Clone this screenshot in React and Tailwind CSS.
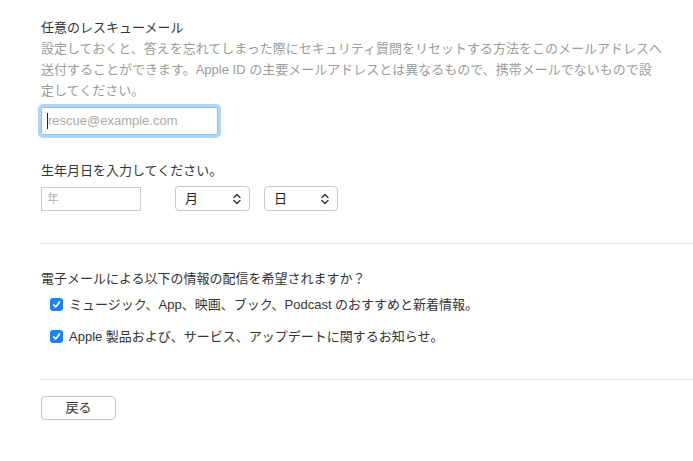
import { useState } from "react";

const font = { fontFamily: '"Liberation Sans", "Noto Sans CJK JP", sans-serif' };

function UpDown() {
  return (
    <svg width="8" height="12" viewBox="0 0 8 12" className="text-[#333]">
      <path d="M1 4.5 L4 1.5 L7 4.5" fill="none" stroke="currentColor" strokeWidth="1.4" strokeLinecap="round" strokeLinejoin="round" />
      <path d="M1 7.5 L4 10.5 L7 7.5" fill="none" stroke="currentColor" strokeWidth="1.4" strokeLinecap="round" strokeLinejoin="round" />
    </svg>
  );
}

function Select({ label, width }) {
  return (
    <div className={`${width} h-[25px] flex items-center justify-between pl-[9px] pr-[8px] bg-white border border-[#c9c9c9] rounded-[4px] text-[13px] text-[#222]`}>
      <span>{label}</span>
      <UpDown />
    </div>
  );
}

function Check({ checked, onToggle, children }) {
  return (
    <label className="flex items-center gap-[6px] cursor-pointer" onClick={onToggle}>
      <span className={`w-[13px] h-[13px] rounded-[3px] flex items-center justify-center ${checked ? "bg-[#1b82fb]" : "bg-white border border-[#bbb]"}`}>
        {checked && (
          <svg width="9" height="9" viewBox="0 0 9 9">
            <path d="M1.5 4.8 L3.6 6.9 L7.6 1.9" fill="none" stroke="white" strokeWidth="1.6" strokeLinecap="round" strokeLinejoin="round" />
          </svg>
        )}
      </span>
      <span className="text-[13px] text-[#333]">{children}</span>
    </label>
  );
}

export default function App() {
  const [music, setMusic] = useState(true);
  const [news, setNews] = useState(true);

  return (
    <div className="min-h-screen bg-white pl-[41px] pt-[17px]" style={font}>
      <section>
        <h2 className="text-[13px] leading-[21px] text-[#333]">任意のレスキューメール</h2>
        <p className="text-[13px] leading-[21px] text-[#9b9b9b] whitespace-nowrap">
          設定しておくと、答えを忘れてしまった際にセキュリティ質問をリセットする方法をこのメールアドレスへ
          <br />
          送付することができます。Apple ID の主要メールアドレスとは異なるもので、携帯メールでないもので設
          <br />
          定してください。
        </p>
        <div className="mt-[6px] w-[177px] h-[28px] flex items-center px-[5px] border border-[#94bde9] outline-[3px] outline-solid outline-[#b0d5fc] rounded-[2px]">
          <span className="w-px h-[16px] bg-[#222]" />
          <span className="text-[13px] text-[#aaa]">rescue@example.com</span>
        </div>
      </section>

      <section className="mt-[25px]">
        <h2 className="text-[13px] leading-[21px] text-[#333]">生年月日を入力してください。</h2>
        <div className="mt-[5px] flex items-center">
          <div className="w-[100px] h-[24px] flex items-center px-[5px] border border-[#cbcbcb] text-[12px] text-[#b5b5b5]">年</div>
          <div className="ml-[34px]"><Select label="月" width="w-[75px]" /></div>
          <div className="ml-[14px]"><Select label="日" width="w-[74px]" /></div>
        </div>
      </section>

      <hr className="mt-[32px] border-t border-[#e3e3e3]" />

      <section className="pt-[24px]">
        <h2 className="text-[13px] leading-[21px] text-[#333]">電子メールによる以下の情報の配信を希望されますか？</h2>
        <div className="mt-[6px] ml-[9px] flex flex-col gap-[12px]">
          <Check checked={music} onToggle={() => setMusic(!music)}>
            ミュージック、App、映画、ブック、Podcast のおすすめと新着情報。
          </Check>
          <Check checked={news} onToggle={() => setNews(!news)}>
            Apple 製品および、サービス、アップデートに関するお知らせ。
          </Check>
        </div>
      </section>

      <hr className="mt-[33px] border-t border-[#e3e3e3]" />

      <div className="pt-[15px] pb-[40px]">
        <button className="w-[75px] h-[24px] bg-white border border-[#c6c6c6] rounded-[4px] text-[13px] text-[#333]">
          戻る
        </button>
      </div>
    </div>
  );
}
